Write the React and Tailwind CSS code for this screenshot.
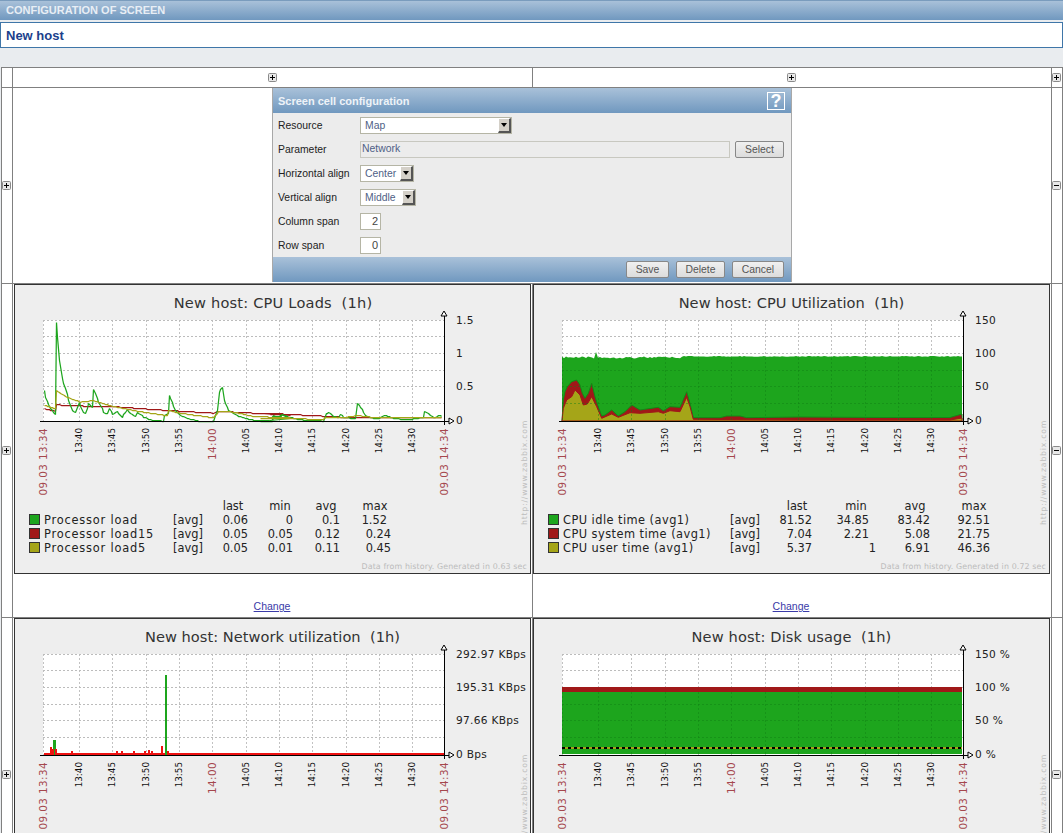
const Z3 = (a) => a.map(([x, y]) => [x / 3, 280 + y / 3]);
const Z4 = (a) => a.map(([x, y]) => [260 + x / 3, 300 + y / 3]);
const Z5 = (a) => a.map(([x, y]) => [530 + x / 3, 290 + y / 3]);
const P = (a) => a.map(([x, y]) => `${x.toFixed(1)},${y.toFixed(1)}`).join(" ");

// resample to the slightly stepped look of the original graph lines
const step = (a, dx = 1.67) => {
  const out = [];
  for (let i = 0; i < a.length - 1; i++) {
    const [x0, y0] = a[i];
    const [x1, y1] = a[i + 1];
    const n = Math.max(1, Math.round((x1 - x0) / dx));
    for (let k = 0; k < n; k++) {
      out.push([Math.round(x0 + ((x1 - x0) * k) / n) + 0.5, Math.round(y0 + ((y1 - y0) * k) / n) + 0.5]);
    }
  }
  return out;
};

const loadG = [...Z3([[132,330],[135,350],[150,385],[165,403],[167,127],[172,170],[178,240],[185,295],[195,325],[205,360],[215,390],[225,397],[237,365],[245,390],[255,400],[265,370],[275,380],[278,328],[285,340],[295,365],[310,395],[320,400],[327,385],[337,403],[350,392],[365,410],[380,387],[390,400],[405,408],[410,395],[430,410],[450,418],[490,422],[492,405],[503,400],[507,345],[515,365],[525,390],[540,405],[560,413],[595,422],[640,422],[652,390],[656,335],[665,320],[672,360],[685,390],[710,405],[750,418],[815,422],[818,405],[835,410],[845,402],[870,415]]), ...Z4([[0,362],[35,362],[37,347],[60,350],[66,342],[85,350],[120,358],[190,362],[197,340],[205,335],[215,345],[235,352],[240,342],[250,350],[285,355],[292,308],[300,320],[315,345],[330,350],[350,355],[372,345],[395,352],[430,358],[460,355],[490,350],[493,332],[505,340],[520,352],[535,345],[548,348]])];
const loadO = [...Z3([[132,375],[165,385],[167,330],[200,350],[240,365],[280,360],[340,378],[400,390],[500,405],[505,390],[540,398],[640,412],[655,392],[700,395],[760,408],[870,412]]), ...Z4([[0,355],[120,355],[190,357],[195,350],[250,352],[290,345],[330,350],[548,350]])];
const loadR = [...Z3([[132,385],[165,392],[168,373],[260,377],[340,378],[430,385],[540,392],[640,398],[655,392],[870,404]]), ...Z4([[0,338],[60,340],[190,347],[250,350],[548,350]])];

const redTop = [...Z5([[100,330],[105,305],[112,290],[125,275],[140,270],[150,285],[157,310],[165,325],[175,310],[185,280],[195,320],[205,350],[215,378],[225,375],[245,360],[265,378],[285,365],[305,345],[330,360],[385,352],[400,362],[420,350],[450,352],[470,305],[480,340],[490,383],[570,383],[590,378],[630,378],[650,383],[810,381]]), [880, 417.5], [950, 417.5], [962, 414]];
const oliveTop = [...Z5([[100,355],[110,330],[125,320],[135,300],[150,315],[160,345],[172,342],[185,320],[200,350],[215,385],[245,372],[265,382],[300,368],[330,370],[385,365],[400,370],[420,362],[450,365],[470,322],[480,350],[490,388],[810,390]]), [950, 420], [962, 418]];
const greenTop = Array.from({ length: 201 }, (_, i) => {
  const n = (Math.sin(i * 12.9898) * 43758.5453) % 1;
  let y = 356.5 + Math.abs(n) * 2;
  if (i === 17) y = 352;
  if (i > 60) y = 356 + Math.abs(n) * 0.8;
  return [562 + i * 2, y];
});

const XT = [[79, "13:40"], [112, "13:45"], [146, "13:50"], [179, "13:55"], [246, "14:05"], [279, "14:10"], [312, "14:15"], [346, "14:20"], [379, "14:25"], [412, "14:30"]];
const VLINES = [43, 79, 112, 146.5, 179, 212, 246.5, 279, 312, 346.5, 379, 412.5];
const HLINES = [320, 336.5, 353.5, 370, 386, 403.5];

const Rot = ({ x, y, children, red, size, sp }) => (
  <text transform={`translate(${x} ${y}) rotate(-90)`} textAnchor="end" fontSize={size} letterSpacing={sp} fill={red ? "#a5474d" : "#111"}>{children}</text>
);

function Chart({ title, titleX, titleSp, ylabels, plot, host }) {
  return (
    <div className="w-[517px] h-[290px] border border-[#333] bg-[#eeeeee] shrink-0">
      <svg width="515" height="288" viewBox="15 285 515 288" style={{ fontFamily: "'DejaVu Sans', sans-serif" }}>
        <text x={titleX} y="308" textAnchor="middle" fontSize="14.6" letterSpacing={titleSp} fill="#333" xmlSpace="preserve">{title}</text>
        <rect x="43" y="320" width="401" height="101" fill="#fff" />
        {VLINES.map((x) => <line key={x} x1={x} x2={x} y1="320" y2="421" stroke="#c2c2c2" strokeDasharray="2 2" shapeRendering="crispEdges" />)}
        {HLINES.map((y) => <line key={y} x1="43" x2="444" y1={y} y2={y} stroke="#bcbcbc" strokeDasharray="2 2" shapeRendering="crispEdges" />)}
        {plot}
        <line x1="444" x2="444" y1="312" y2="425" stroke="#000" shapeRendering="crispEdges" />
        <line x1="40" x2="452" y1="421" y2="421" stroke="#000" shapeRendering="crispEdges" />
        <path d="M444 311 L441 316 L447 316 Z" fill="#fff" stroke="#000" />
        <path d="M454 421 L449 418 L449 424 Z" fill="#fff" stroke="#000" />
        {ylabels.map(([t, y]) => <text key={t} x="456" y={y} fontSize="10.6" letterSpacing="0.3" fill="#222">{t}</text>)}
        <Rot x="47" y="428" red size="10.4" sp="0.4">09.03 13:34</Rot>
        <Rot x="448" y="428" red size="10.4" sp="0.4">09.03 14:34</Rot>
        <Rot x="216" y="428" red size="10.4" sp="0.4">14:00</Rot>
        {XT.map(([x, t]) => <Rot key={t} x={x + 3} y="428" size="8.8">{t}</Rot>)}
        <text transform="translate(527 525) rotate(-90)" fontSize="7.8" letterSpacing="0.75" fill="#bdbdbd">http://www.zabbix.com</text>
        {host}
      </svg>
    </div>
  );
}

function Legend({ rows, heads, sq, tx, av, sp }) {
  return (
    <g fill="#222" fontSize="11.4">
      {heads.map(([t, x]) => <text key={t} x={x} y="510" textAnchor="middle">{t}</text>)}
      {rows.map((r, i) => (
        <g key={r.n}>
          <rect x={sq + 0.5} y={514.5 + i * 14} width="10" height="10" fill={r.c} stroke="#333" />
          <text x={tx} y={524 + i * 14} letterSpacing={sp}>{r.n}</text>
          <text x={av} y={524 + i * 14}>[avg]</text>
          {r.v.map(([t, x], k) => <text key={k} x={x} y={524 + i * 14} textAnchor="end">{t}</text>)}
        </g>
      ))}
    </g>
  );
}

const G = "#1da51d";
const R = "#a01818";
const O = "#a5a518";

const Plus = ({ minus }) => (
  <svg width="9" height="9" viewBox="0 0 9 9" className="block">
    <rect x="0.5" y="0.5" width="8" height="8" rx="1" fill="#e8e8e8" stroke="#8a8a8a" />
    <path d={minus ? "M2 4.5H7" : "M2 4.5H7M4.5 2V7"} stroke="#000" shapeRendering="crispEdges" />
  </svg>
);

const Cell = ({ children, className = "" }) => <div className={`bg-white min-w-0 ${className}`}>{children}</div>;
const Side = ({ minus }) => <Cell className="flex items-center justify-center pr-[1px] pb-[1px]"><Plus minus={minus} /></Cell>;

const Change = () => (
  <div className="h-[42px] flex items-end justify-center pb-[1px] pr-[2px] text-[10.5px] underline text-[#3a3aa8]">Change</div>
);

const Sel = ({ w, t }) => (
  <div className={`flex items-center justify-between h-[17px] bg-white border border-[#b5b5a5] ${w}`}>
    <span className="pl-[4px] pt-[1px] text-[10.4px] text-[#4f5f86]">{t}</span>
    <div className="w-[13px] h-[15px] flex items-center justify-center bg-[#d4d0c8] border-t border-l border-t-white border-l-white border-b-2 border-r-2 border-b-[#555] border-r-[#555]">
      <div className="w-0 h-0 border-l-[3px] border-r-[3px] border-t-[4px] border-l-transparent border-r-transparent border-t-black" />
    </div>
  </div>
);

const Btn = ({ t, w }) => (
  <div className={`h-[17px] flex items-center justify-center rounded-[2px] border border-[#888] bg-[linear-gradient(#f0f0f0,#dcdcdc)] text-[10.4px] text-[#555] ${w}`}>{t}</div>
);

const Row = ({ label, children }) => (
  <div className="h-[24px] flex items-center">
    <div className="w-[82px] pt-[1px] text-[10.4px] text-[#222]">{label}</div>
    {children}
  </div>
);

const Num = ({ v }) => <div className="w-[21px] h-[17px] bg-white border border-[#b5b5a5] text-right pr-[2px] text-[11px] leading-[15px] text-[#444]">{v}</div>;

export default function App() {
  return (
    <div className="relative w-[1063px] h-[833px] overflow-hidden bg-[#e9ecef] text-[11px]" style={{ fontFamily: "'Liberation Sans', Arial, sans-serif" }}>
      <div className="h-[20px] px-[6px] flex items-center text-[11px] font-bold text-[#e8eef5] bg-[linear-gradient(#a9c1d9,#7098bf)] border-t border-t-[#7a9cbd]">CONFIGURATION OF SCREEN</div>
      <div className="mt-[2px] h-[26px] px-[5px] pt-[1px] flex items-center bg-white border border-[#3f76a8] text-[13px] font-bold text-[#1c3f8c]">New host</div>

      <div className="absolute left-[1px] top-[67px] w-[1062px] p-[1px] grid gap-[1px] bg-[#808080] grid-cols-[10px_519px_518px_10px] grid-rows-[19px_195px_333px_314px]">
        <Cell />
        <Cell className="flex items-center justify-center pr-[1px]"><Plus /></Cell>
        <Cell className="flex items-center justify-center pr-[2px]"><Plus /></Cell>
        <Side />

        <Side />
        <Cell className="col-span-2 relative">
          <div className="absolute left-[259px] top-0 w-[520px] h-[194px] bg-[#ececec] border-x border-[#a8a8a8]">
            <div className="h-[25px] px-[5px] flex items-center justify-between bg-[linear-gradient(#a9c1d9,#7098bf)]">
              <span className="font-bold pt-[1px] text-[11px] text-[#eef3f8]">Screen cell configuration</span>
              <div className="w-[18px] h-[18px] mr-[1px] border border-white flex items-center justify-center text-white font-bold text-[18px] leading-none">?</div>
            </div>
            <div className="px-[5px]">
              <Row label="Resource"><Sel w="w-[152px]" t="Map" /></Row>
              <Row label="Parameter">
                <div className="w-[370px] h-[17px] border border-[#c8c8c0] pl-[1px] text-[10.4px] leading-[13px] text-[#4f5f86]">Network</div>
                <div className="ml-[5px] mt-[1px]"><Btn t="Select" w="w-[49px]" /></div>
              </Row>
              <Row label="Horizontal align"><Sel w="w-[54px]" t="Center" /></Row>
              <Row label="Vertical align"><Sel w="w-[56px]" t="Middle" /></Row>
              <Row label="Column span"><Num v="2" /></Row>
              <Row label="Row span"><Num v="0" /></Row>
            </div>
            <div className="absolute left-0 right-0 bottom-0 h-[25px] flex items-center justify-end gap-[7px] pr-[7px] bg-[linear-gradient(#a9c1d9,#7098bf)]">
              <Btn t="Save" w="w-[43px]" />
              <Btn t="Delete" w="w-[49px]" />
              <Btn t="Cancel" w="w-[52px]" />
            </div>
          </div>
        </Cell>
        <Side minus />

        <Side />
        <Cell className="pl-[1px]">
          <Chart title="New host: CPU Loads  (1h)" titleX="273" titleSp="0.2" ylabels={[["1.5", 324], ["1", 357], ["0.5", 390], ["0", 424]]}
            plot={<g fill="none" strokeWidth="1.25" strokeLinejoin="bevel"><polyline points={P(step(loadR))} stroke={R} /><polyline points={P(step(loadG))} stroke={G} /><polyline points={P(step(loadO))} stroke={O} /></g>}
            host={<>
              <Legend sq={29} tx={44} av={173} sp="0.8"
                heads={[["last", 233], ["min", 280], ["avg", 326], ["max", 375]]}
                rows={[
                  { n: "Processor load", c: G, v: [["0.06", 248], ["0", 293], ["0.1", 340], ["1.52", 387]] },
                  { n: "Processor load15", c: R, v: [["0.05", 248], ["0.05", 293], ["0.12", 340], ["0.24", 391]] },
                  { n: "Processor load5", c: O, v: [["0.05", 248], ["0.01", 293], ["0.11", 340], ["0.45", 391]] },
                ]} />
              <text x="527" y="569" textAnchor="end" fontSize="7.9" letterSpacing="0.12" fill="#bbbbbb">Data from history. Generated in 0.63 sec</text>
            </>} />
          <Change />
        </Cell>
        <Cell>
          <Chart title="New host: CPU Utilization  (1h)" titleX="272.5" titleSp="0.05" ylabels={[["150", 324], ["100", 357], ["50", 390], ["0", 424]]} />
          <Change />
        </Cell>
        <Side minus />

        <Side />
        <Cell className="pl-[1px]">
          <Chart title="New host: Network utilization  (1h)" titleX="272.5" titleSp="0.03" ylabels={[["292.97 KBps", 324], ["195.31 KBps", 357], ["97.66 KBps", 390], ["0 Bps", 424]]}
            plot={<g shapeRendering="crispEdges">
              <rect x="44" y="419" width="400" height="2" fill="#ee1111" />
              <rect x="165" y="341" width="2" height="80" fill={G} />
              <rect x="53" y="406" width="3" height="15" fill={G} />
              {[[50, 413], [52, 415], [55, 415], [71, 417], [116, 417], [121, 417], [133, 417], [144, 417], [148, 416], [151, 417], [161, 412], [167, 417]].map(([x, y]) => <rect key={x + "r"} x={x} y={y} width="2" height={421 - y} fill="#ee1111" />)}
            </g>} />
        </Cell>
        <Cell>
          <Chart title="New host: Disk usage  (1h)" titleX="272.5" titleSp="0.12" ylabels={[["150 %", 324], ["100 %", 357], ["50 %", 390], ["0 %", 424]]} />
        </Cell>
        <Side minus />
      </div>

      {/* chart 2 drawing layer */}
      <svg className="absolute left-[534px] top-[285px] pointer-events-none" width="515" height="288" viewBox="534 285 515 288" style={{ fontFamily: "'DejaVu Sans', sans-serif" }}>
        <polygon points={`562,421 ${P(greenTop)} 962,421`} fill={G} />
        <polygon points={`562,421 ${P(redTop)} 962,421`} fill={R} stroke="#128a16" />
        <polygon points={`562,421 ${P(oliveTop)} 962,421`} fill={O} stroke="#a01818" />
        {VLINES.map((x) => <line key={x} x1={x + 519} x2={x + 519} y1="358" y2="420" stroke="#0f7f14" strokeOpacity="0.45" strokeDasharray="2 2" shapeRendering="crispEdges" />)}
        {[370, 386, 403.5].map((y) => <line key={y} x1="562" x2="962" y1={y} y2={y} stroke="#0f7f14" strokeOpacity="0.45" strokeDasharray="2 2" shapeRendering="crispEdges" />)}
        <line x1="559" x2="964" y1="421" y2="421" stroke="#000" shapeRendering="crispEdges" />
        <Legend sq={548} tx={563} av={730} sp="0.45"
          heads={[["last", 797], ["min", 856], ["avg", 915], ["max", 974]]}
          rows={[
            { n: "CPU idle time (avg1)", c: G, v: [["81.52", 812], ["34.85", 869], ["83.42", 930], ["92.51", 990]] },
            { n: "CPU system time (avg1)", c: R, v: [["7.04", 812], ["2.21", 869], ["5.08", 930], ["21.75", 990]] },
            { n: "CPU user time (avg1)", c: O, v: [["5.37", 812], ["1", 876], ["6.91", 930], ["46.36", 990]] },
          ]} />
        <text x="1046" y="569" textAnchor="end" fontSize="7.9" letterSpacing="0.12" fill="#bbbbbb">Data from history. Generated in 0.72 sec</text>
      </svg>

      {/* chart 4 drawing layer */}
      <svg className="absolute left-[534px] top-[619px] pointer-events-none" width="515" height="214" viewBox="534 619 515 214">
        <rect x="562" y="692" width="400" height="62" fill={G} />
        <rect x="562" y="687" width="400" height="5" fill={R} />
        {VLINES.map((x) => <line key={x} x1={x + 519} x2={x + 519} y1="692" y2="754" stroke="#0f7f14" strokeOpacity="0.45" strokeDasharray="2 2" shapeRendering="crispEdges" />)}
        {[704, 720, 737].map((y) => <line key={y} x1="562" x2="962" y1={y} y2={y} stroke="#0f7f14" strokeOpacity="0.45" strokeDasharray="2 2" shapeRendering="crispEdges" />)}
        <line x1="562" x2="962" y1="748" y2="748" stroke="#a5a518" strokeWidth="2" shapeRendering="crispEdges" />
        <line x1="562" x2="962" y1="748" y2="748" stroke="#000" strokeWidth="2" strokeDasharray="3 3" shapeRendering="crispEdges" />
        <line x1="559" x2="964" y1="755" y2="755" stroke="#000" shapeRendering="crispEdges" />
      </svg>
    </div>
  );
}
